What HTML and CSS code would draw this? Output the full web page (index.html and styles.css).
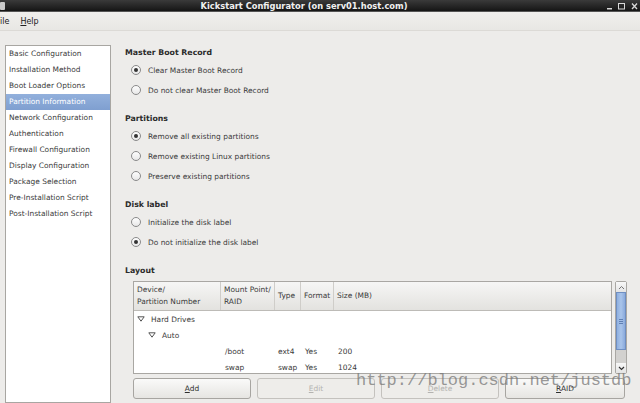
FILE: index.html
```html
<!DOCTYPE html>
<html>
<head>
<meta charset="utf-8">
<link rel="stylesheet" href="styles.css">
</head>
<body>
<div class="window">
  <div class="titlebar">
    <span class="app-icon"></span>
    <span class="title">Kickstart Configurator (on serv01.host.com)</span>
    <span class="controls">
      <svg width="32" height="10" viewBox="0 0 32 10">
        <rect x="1" y="7" width="5" height="1.5" fill="#d8d8d8"/>
        <rect x="12.5" y="2.5" width="6" height="5.5" fill="none" stroke="#d8d8d8" stroke-width="1"/>
        <path d="M26 2.5 L31 8 M31 2.5 L26 8" stroke="#d8d8d8" stroke-width="1.3"/>
      </svg>
    </span>
  </div>
  <div class="menubar">
    <span class="menu">ile</span>
    <span class="menu"><u>H</u>elp</span>
  </div>
  <div class="main">
    <ul class="sidebar">
      <li>Basic Configuration</li>
      <li>Installation Method</li>
      <li>Boot Loader Options</li>
      <li class="selected">Partition Information</li>
      <li>Network Configuration</li>
      <li>Authentication</li>
      <li>Firewall Configuration</li>
      <li>Display Configuration</li>
      <li>Package Selection</li>
      <li>Pre-Installation Script</li>
      <li>Post-Installation Script</li>
    </ul>
    <div class="content">
      <div class="section">
        <div class="heading">Master Boot Record</div>
        <div class="radio checked"><span class="dot"></span>Clear Master Boot Record</div>
        <div class="radio"><span class="dot"></span>Do not clear Master Boot Record</div>
      </div>
      <div class="section">
        <div class="heading">Partitions</div>
        <div class="radio checked"><span class="dot"></span>Remove all existing partitions</div>
        <div class="radio"><span class="dot"></span>Remove existing Linux partitions</div>
        <div class="radio"><span class="dot"></span>Preserve existing partitions</div>
      </div>
      <div class="section">
        <div class="heading">Disk label</div>
        <div class="radio"><span class="dot"></span>Initialize the disk label</div>
        <div class="radio checked"><span class="dot"></span>Do not initialize the disk label</div>
      </div>
      <div class="section layout">
        <div class="heading">Layout</div>
        <div class="table-wrap">
          <div class="table">
            <div class="thead">
              <div class="th c1">Device/<br>Partition Number</div>
              <div class="th c2">Mount Point/<br>RAID</div>
              <div class="th c3">Type</div>
              <div class="th c4">Format</div>
              <div class="th c5">Size (MB)</div>
            </div>
            <div class="tbody">
              <div class="tr"><div class="td tree lvl1"><svg class="tri" width="8" height="6" viewBox="0 0 8 6"><path d="M0.8 0.8 H7.2 L4 5.2 Z" fill="#fff" stroke="#555" stroke-width="1"/></svg>Hard Drives</div></div>
              <div class="tr"><div class="td tree lvl2"><svg class="tri" width="8" height="6" viewBox="0 0 8 6"><path d="M0.8 0.8 H7.2 L4 5.2 Z" fill="#fff" stroke="#555" stroke-width="1"/></svg>Auto</div></div>
              <div class="tr"><div class="td c1"></div><div class="td c2">/boot</div><div class="td c3">ext4</div><div class="td c4">Yes</div><div class="td c5">200</div></div>
              <div class="tr"><div class="td c1"></div><div class="td c2">swap</div><div class="td c3">swap</div><div class="td c4">Yes</div><div class="td c5">1024</div></div>
            </div>
          </div>
          <div class="scrollbar">
            <div class="arrow up"><svg width="7" height="5" viewBox="0 0 7 5"><path d="M1 4 L3.5 1.5 L6 4" fill="none" stroke="#777" stroke-width="1"/></svg></div>
            <div class="thumb"><span></span><span></span><span></span></div>
            <div class="trough"></div>
            <div class="arrow down"><svg width="7" height="5" viewBox="0 0 7 5"><path d="M1 1 L3.5 3.5 L6 1" fill="none" stroke="#333" stroke-width="1.2"/></svg></div>
          </div>
        </div>
        <div class="buttons">
          <button class="btn"><u>A</u>dd</button>
          <button class="btn disabled"><u>E</u>dit</button>
          <button class="btn disabled"><u>D</u>elete</button>
          <button class="btn"><u>R</u>AID</button>
        </div>
      </div>
    </div>
  </div>
  <div class="watermark">http://blog.csdn.net/justdb</div>
</div>
</body>
</html>
```
FILE: styles.css
```css
* { box-sizing: border-box; }
html, body { margin: 0; padding: 0; }
body {
  width: 640px;
  height: 403px;
  overflow: hidden;
  background: #edecea;
  font-family: "DejaVu Sans", sans-serif;
  font-size: 7.45px;
  color: #333;
}
.window { position: relative; height: 403px; }
.titlebar {
  height: 12px;
  background: linear-gradient(#3a3a3a, #151515);
  border-bottom: 1px solid #555;
  display: flex;
  align-items: center;
}
.app-icon {
  width: 5px; height: 8px;
  background: #c9c9c9;
  border-radius: 1px;
}
.title {
  flex: 1;
  text-align: center;
  color: #f0f0f0;
  font-weight: bold;
  font-size: 8.3px;
  margin-left: -3px;
}
.controls { display: flex; margin-right: 2px; margin-top: 1px; }
.menubar {
  height: 19px;
  display: flex;
  align-items: center;
  background: linear-gradient(#f0efed, #e8e7e4);
  border-bottom: 1px solid #dcdad6;
  font-size: 8px;
  color: #222;
}
.menu { margin-right: 11px; }
.main { display: flex; padding-top: 14px; }
.sidebar {
  list-style: none;
  margin: 0 0 0 5px;
  padding: 0;
  width: 106px;
  height: 358px;
  background: #fff;
  border: 1px solid #a8a6a2;
}
.sidebar li {
  height: 16px;
  line-height: 16px;
  padding-left: 3px;
  white-space: nowrap;
  color: #3a3a3a;
}
.sidebar li.selected {
  background: linear-gradient(#92b0dc, #7f9fd0);
  color: #fff;
}
.content { padding-left: 14px; flex: 1; padding-top: 1px; }
.section { margin-bottom: 12px; }
.section:nth-child(3) .radio:first-of-type { margin-top: 2px; }
.heading {
  font-weight: bold;
  font-size: 7.8px;
  height: 14px;
  line-height: 14px;
  margin-bottom: 0;
  color: #2b2b2b;
}
.radio {
  height: 20px;
  display: flex;
  align-items: center;
  padding-left: 6px;
  color: #3a3a3a;
}
.dot {
  width: 10px; height: 10px;
  border: 1px solid #8a8a8a;
  border-radius: 50%;
  background: linear-gradient(#fdfdfd, #e8e8e8);
  margin-right: 7px;
  display: flex; align-items: center; justify-content: center;
}
.radio.checked .dot::after {
  content: "";
  width: 4px; height: 4px; border-radius: 50%;
  background: #333;
}
.layout .heading { margin-bottom: 3px; }
.table-wrap { display: flex; margin-left: 8px; width: 494px; }
.table {
  width: 479px;
  height: 93px;
  border: 1px solid #a9a7a3;
  background: #fff;
}
.thead {
  display: flex;
  height: 29px;
  background: linear-gradient(#f6f6f5, #e3e2df);
  border-bottom: 1px solid #bdbbb7;
}
.th {
  display: flex;
  align-items: center;
  padding-left: 3px;
  border-right: 1px solid #cfcdc9;
  line-height: 12px;
  white-space: nowrap;
  color: #3a3a3a;
}
.th.c5 { border-right: none; flex: 1; }
.c1 { width: 87px; }
.c2 { width: 54px; }
.c3 { width: 26px; }
.c4 { width: 33px; }
.c5 { flex: 1; }
.tr { display: flex; height: 16px; align-items: center; }
.td { padding-left: 4px; color: #3a3a3a; white-space: nowrap; }
.td.c3 { padding-left: 3px; }
.tree { display: flex; align-items: center; }
.tree.lvl1 { padding-left: 3px; }
.tree.lvl2 { padding-left: 14px; }
.tri { margin-right: 6px; }
.scrollbar {
  width: 12px;
  height: 93px;
  margin-left: 3px;
  border: 1px solid #a9a7a3;
  border-radius: 2px;
  display: flex;
  flex-direction: column;
  background: #d2d1cf;
}
.arrow {
  height: 10px;
  display: flex; align-items: center; justify-content: center;
  background: linear-gradient(#f8f8f8, #e4e4e4);
}
.thumb {
  height: 58px;
  background: linear-gradient(90deg, #8fb0e0, #a9c4ea, #8aaadc);
  border: 1px solid #6f8fc2;
  display: flex; flex-direction: column; align-items: center; justify-content: center;
  gap: 1px;
}
.thumb span { width: 4px; height: 1px; background: #5f7fb3; }
.trough { flex: 1; }
.buttons {
  display: flex;
  gap: 6px;
  margin-left: 8px;
  margin-top: 4px;
  width: 493px;
}
.btn {
  width: 118px;
  height: 21px;
  border: 1px solid #a7a5a1;
  border-radius: 3px;
  background: linear-gradient(#fafaf9, #e6e5e2);
  font-family: "DejaVu Sans", sans-serif;
  font-size: 7.45px;
  color: #2e2e2e;
  padding: 0;
}
.btn.disabled { color: #b4b3b0; border-color: #c4c2be; background: #eeedea; }
.btn:last-child { width: 120px; }
.watermark {
  position: absolute;
  left: 356px;
  top: 371px;
  font-family: "Liberation Mono", monospace;
  font-size: 17px;
  color: rgba(120,120,120,0.75);
  pointer-events: none;
}
```
